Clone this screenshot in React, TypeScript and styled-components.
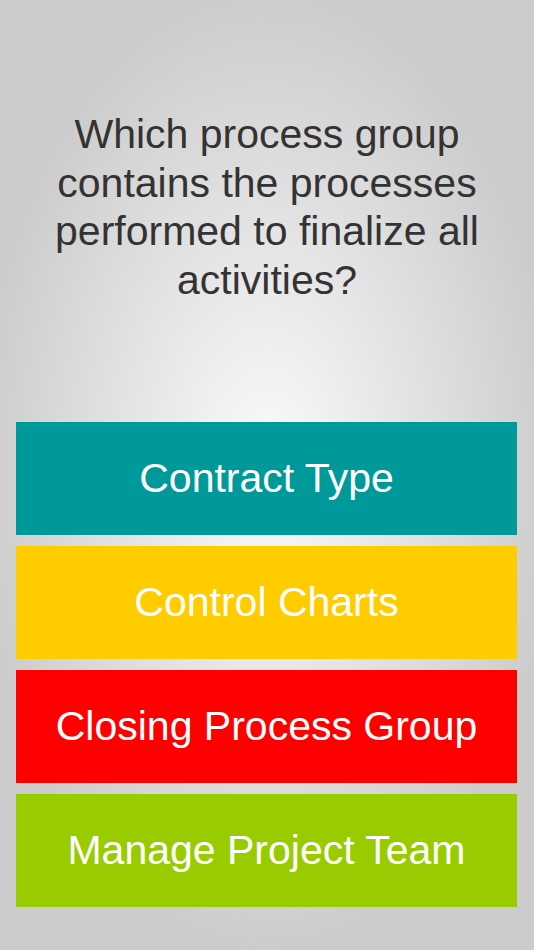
import React from 'react';
import styled, { createGlobalStyle } from 'styled-components';

const GlobalStyle = createGlobalStyle`
  html, body {
    margin: 0;
    padding: 0;
  }
  body {
    font-family: "Liberation Sans", Helvetica, Arial, sans-serif;
  }
`;

const Screen = styled.div`
  width: 534px;
  height: 950px;
  display: flex;
  flex-direction: column;
  background: radial-gradient(
    ellipse 290px 480px at 50% 470px,
    #fbfbfb 0%,
    #cccccc 100%
  );
  overflow: hidden;
`;

const QuestionArea = styled.div`
  height: 422px;
  box-sizing: border-box;
  padding: 110px 40px 0;
`;

const Question = styled.h1`
  margin: 0;
  font-size: 41px;
  font-weight: 400;
  line-height: 48.7px;
  color: #333;
  text-align: center;
`;

const Answers = styled.div`
  display: flex;
  flex-direction: column;
  gap: 11px;
  padding: 0 17px 0 16px;
`;

const Answer = styled.button<{ $bg: string }>`
  height: 113px;
  width: 100%;
  border: none;
  margin: 0;
  padding: 0;
  display: flex;
  align-items: center;
  justify-content: center;
  background: ${(p) => p.$bg};
  color: #fff;
  font-family: "Liberation Sans", Helvetica, Arial, sans-serif;
  font-size: 41px;
  cursor: pointer;
`;

const answers = [
  { label: 'Contract Type', color: '#009999' },
  { label: 'Control Charts', color: '#ffcc00' },
  { label: 'Closing Process Group', color: '#ff0000' },
  { label: 'Manage Project Team', color: '#99cc00' },
];

export default function App() {
  return (
    <>
      <GlobalStyle />
      <Screen>
        <QuestionArea>
          <Question>
            Which process group contains the processes performed to finalize
            all activities?
          </Question>
        </QuestionArea>
        <Answers>
          {answers.map((a) => (
            <Answer key={a.label} $bg={a.color}>
              {a.label}
            </Answer>
          ))}
        </Answers>
      </Screen>
    </>
  );
}
